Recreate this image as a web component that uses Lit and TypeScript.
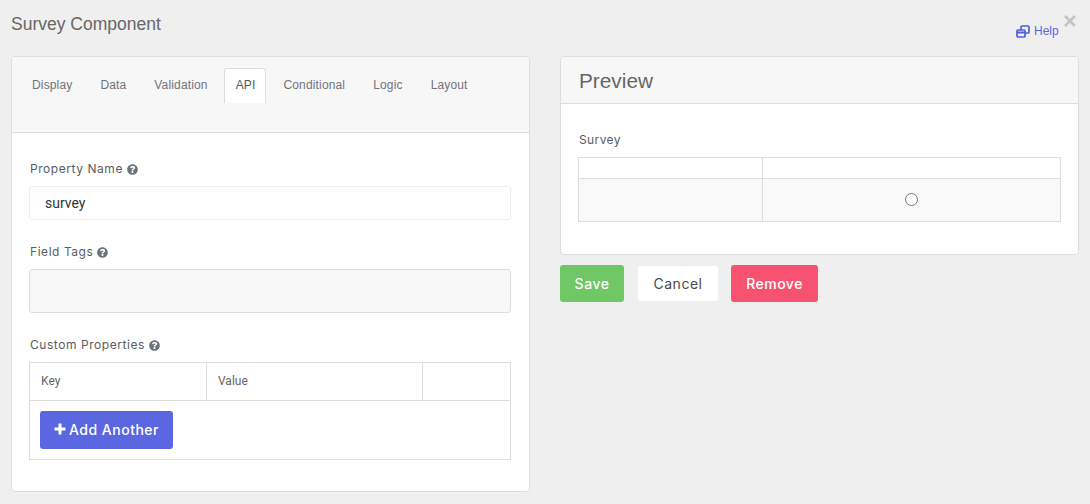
import { LitElement, html, css } from "lit";
import { customElement } from "lit/decorators.js";

const help = html`<svg class="q" viewBox="0 0 512 512" width="11" height="11"><path fill="#6c757d" d="M504 256c0 137-111 248-248 248S8 393 8 256 119 8 256 8s248 111 248 248zM262.700 90c-54.500 0-89.300 23-116.500 63.800-3.500 5.300-2.400 12.400 2.700 16.300l34.700 26.300c5.200 3.900 12.600 3 16.700-2.100 17.900-22.700 30.100-35.800 57.300-35.800 20.400 0 45.700 13.100 45.700 32.900 0 15-12.400 22.700-32.600 34-23.600 13.200-54.800 29.700-54.800 70.900V290c0 6.600 5.400 12 12 12h56c6.600 0 12-5.400 12-12v-6.300c0-28.600 83.500-29.800 83.500-107.100C380.400 118.400 320 90 262.700 90zM256 328c-25.400 0-46 20.600-46 46s20.600 46 46 46 46-20.600 46-46-20.600-46-46-46z"/></svg>`;

@customElement("app-root")
export class AppRoot extends LitElement {
  static styles = css`
    :host { display: block; width: 1090px; height: 504px; background: #efefef; font-family: "Liberation Sans", Arial, sans-serif; overflow: hidden; }
    .page { display: flex; flex-direction: column; height: 504px; padding: 0 11px; box-sizing: border-box; position: relative; }
    .title { height: 56px; padding-top: 14px; box-sizing: border-box; font-size: 17.5px; line-height: 20px; color: #666; flex: none; }
    .close { position: absolute; left: 1063px; top: 14px; }
    .help { position: absolute; left: 1016px; top: 24px; display: flex; align-items: center; gap: 4px; font-size: 12px; line-height: 14px; color: #5a67e0; }
    .cols { display: flex; gap: 30px; align-items: flex-start; }
    .card { background: #fff; border: 1px solid #ddd; border-radius: 4px; box-sizing: border-box; overflow: hidden; }
    .left { width: 519px; height: 436px; }
    .right-col { width: 519px; }
    .right { height: 199px; }
    .tabs-head { height: 76px; background: #f7f7f7; border-bottom: 1px solid #ddd; box-sizing: border-box; padding: 11px 0 0 9px; display: flex; align-items: flex-start; }
    .tab { height: 35px; padding: 0 10px; border: 1px solid transparent; border-bottom: 0; border-radius: 3px 3px 0 0; margin-right: 6px; font-size: 12px; letter-spacing: 0.15px; line-height: 32px; color: #70747b; box-sizing: border-box; }
    .tab.on { background: #fff; border-color: #ddd; color: #555; margin-left: -1px; padding-left: 11px; }
    .body { padding: 0 18px 0 17px; }
    .lbl { font-family: "Inter", sans-serif; font-size: 12px; letter-spacing: 0.55px; line-height: 16px; color: #585c63; display: flex; align-items: center; gap: 4px; margin-left: 1px; }
    .lbl1 { margin-top: 28px; }
    .lbl2 { margin-top: 24px; }
    .lbl3 { margin-top: 24px; }
    .input { margin-top: 9px; height: 34px; border: 1px solid #eceef2; border-radius: 3px; box-sizing: border-box; padding: 0 15px; font-size: 14px; line-height: 32px; color: #333; font-family: "Roboto", sans-serif; }
    .input.dis { height: 44px; background: #f8f8f8; border-color: #ddd; }
    .grid { margin-top: 9px; border: 1px solid #ddd; height: 98px; box-sizing: border-box; }
    .grow { display: flex; height: 38px; border-bottom: 1px solid #ddd; box-sizing: border-box; font-family: "Roboto", sans-serif; font-size: 12px; color: #666; }
    .grow div { line-height: 36px; padding-left: 11px; box-sizing: border-box; border-right: 1px solid #ddd; }
    .c1 { width: 177px; }
    .c2 { width: 216px; }
    .c3 { flex: 1; border-right: 0 !important; }
    .btn { display: inline-flex; align-items: center; justify-content: center; border-radius: 3px; box-sizing: border-box; font-family: "Inter", sans-serif; font-size: 14px; letter-spacing: 0.5px; font-weight: 500; color: #fff; }
    .add { margin: 10px 0 0 10px; width: 133px; height: 38px; background: #5a67e0; gap: 3px; padding-bottom: 2px; }
    .preview-head { height: 47px; background: #f7f7f7; border-bottom: 1px solid #ddd; box-sizing: border-box; padding: 0 18px; font-size: 20.8px; line-height: 47px; color: #666; }
    .pbody { padding: 0 17px; }
    .survey { margin-top: 28px; font-family: "Inter", sans-serif; font-size: 12px; letter-spacing: 0.4px; line-height: 16px; color: #585c63; margin-left: 1px; }
    .ptable { margin-top: 9px; border: 1px solid #ddd; height: 65px; box-sizing: border-box; }
    .prow { display: flex; height: 21px; border-bottom: 1px solid #ddd; box-sizing: border-box; }
    .prow.two { height: 42px; background: #f9f9f9; border-bottom: 0; }
    .p1 { width: 183px; border-right: 1px solid #ddd; flex: none; }
    .p2 { flex: 1; display: flex; align-items: center; justify-content: center; }
    .two .p2 { padding-bottom: 2px; box-sizing: border-box; }
    .radio { width: 13px; height: 13px; border: 1px solid #767676; border-radius: 50%; background: #fff; box-sizing: border-box; }
    .actions { display: flex; align-items: center; margin-top: 10px; }
    .save { width: 64px; height: 37px; background: #6fc765; }
    .cancel { width: 80px; height: 35px; background: #fff; color: #4a4a4a; font-weight: 400; margin: 0 13px 0 14px; }
    .remove { width: 87px; height: 37px; background: #f75270; }
  `;
  render() {
    return html`<div class="page">
      <div class="title">Survey Component</div>
      <svg class="close" width="14" height="14" viewBox="0 0 14 14"><path d="M2 2 12 12M12 2 2 12" stroke="#c4c4c4" stroke-width="2.600"/></svg>
      <div class="help"><svg width="14" height="13" viewBox="0 0 14 13" fill="none" stroke="#4f5fd8" stroke-width="1.700"><rect x="5" y="1" width="8" height="7" rx="1"/><rect x="1" y="5" width="8" height="7" rx="1" fill="#efefef"/><path d="M1 7.500H9" stroke-width="2"/></svg>Help</div>
      <div class="cols">
        <div class="card left">
          <div class="tabs-head">
            ${["Display", "Data", "Validation", "API", "Conditional", "Logic", "Layout"].map(
              (t) => html`<div class="tab ${t === "API" ? "on" : ""}">${t}</div>`
            )}
          </div>
          <div class="body">
            <div class="lbl lbl1">Property Name ${help}</div>
            <div class="input">survey</div>
            <div class="lbl lbl2">Field Tags ${help}</div>
            <div class="input dis"></div>
            <div class="lbl lbl3">Custom Properties ${help}</div>
            <div class="grid">
              <div class="grow"><div class="c1">Key</div><div class="c2">Value</div><div class="c3"></div></div>
              <div class="btn add"><svg width="12" height="12" viewBox="0 0 12 12"><path d="M6 0.500V11.500M0.500 6H11.500" stroke="#fff" stroke-width="3"/></svg>Add Another</div>
            </div>
          </div>
        </div>
        <div class="right-col">
          <div class="card right">
            <div class="preview-head">Preview</div>
            <div class="pbody">
              <div class="survey">Survey</div>
              <div class="ptable">
                <div class="prow"><div class="p1"></div><div class="p2"></div></div>
                <div class="prow two"><div class="p1"></div><div class="p2"><div class="radio"></div></div></div>
              </div>
            </div>
          </div>
          <div class="actions">
            <div class="btn save">Save</div>
            <div class="btn cancel">Cancel</div>
            <div class="btn remove">Remove</div>
          </div>
        </div>
      </div>
    </div>`;
  }
}
